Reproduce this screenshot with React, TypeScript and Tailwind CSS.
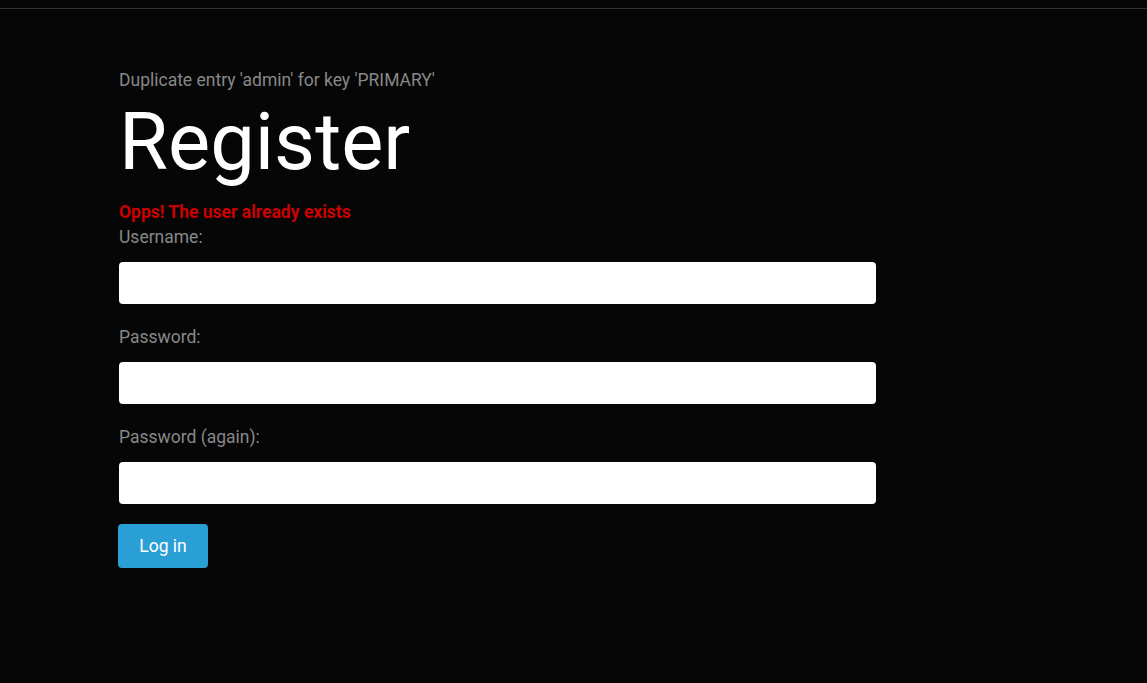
import React from 'react'

const labelCls = "block text-[17.5px] leading-[25px] text-[#888888] mb-3";
const inputCls = "block w-[757px] h-[42px] rounded-[4px] bg-white px-3 text-black outline-none";

export default function App() {
  return (
    <div className="min-h-[683px] bg-[#060606] font-['Roboto',sans-serif]">
      <div className="h-[9px] border-b border-[#323232]" />
      <div className="pl-[119px] pt-[58px]">
        <p className="text-[17.5px] leading-[26px] text-[#888888]">
          Duplicate entry 'admin' for key 'PRIMARY'
        </p>
        <h1 className="mt-[5px] text-[79.5px] leading-[87px] font-normal text-white">Register</h1>
        <form className="mt-[15px]" onSubmit={(e) => e.preventDefault()}>
          <div className="text-[17.5px] leading-[25px] font-bold text-[#cc0000]">Opps! The user already exists</div>
          <label className={labelCls}>Username:</label>
          <input type="text" className={inputCls} />
          <label className={labelCls + " mt-[21px]"}>Password:</label>
          <input type="password" className={inputCls} />
          <label className={labelCls + " mt-[21px]"}>Password (again):</label>
          <input type="password" className={inputCls} />
          <button
            type="submit"
            className="mt-[20px] h-[44px] w-[90px] rounded-[4px] bg-[#2a9fd6] text-[17.5px] text-white -ml-px"
          >
            Log in
          </button>
        </form>
      </div>
    </div>
  )
}
